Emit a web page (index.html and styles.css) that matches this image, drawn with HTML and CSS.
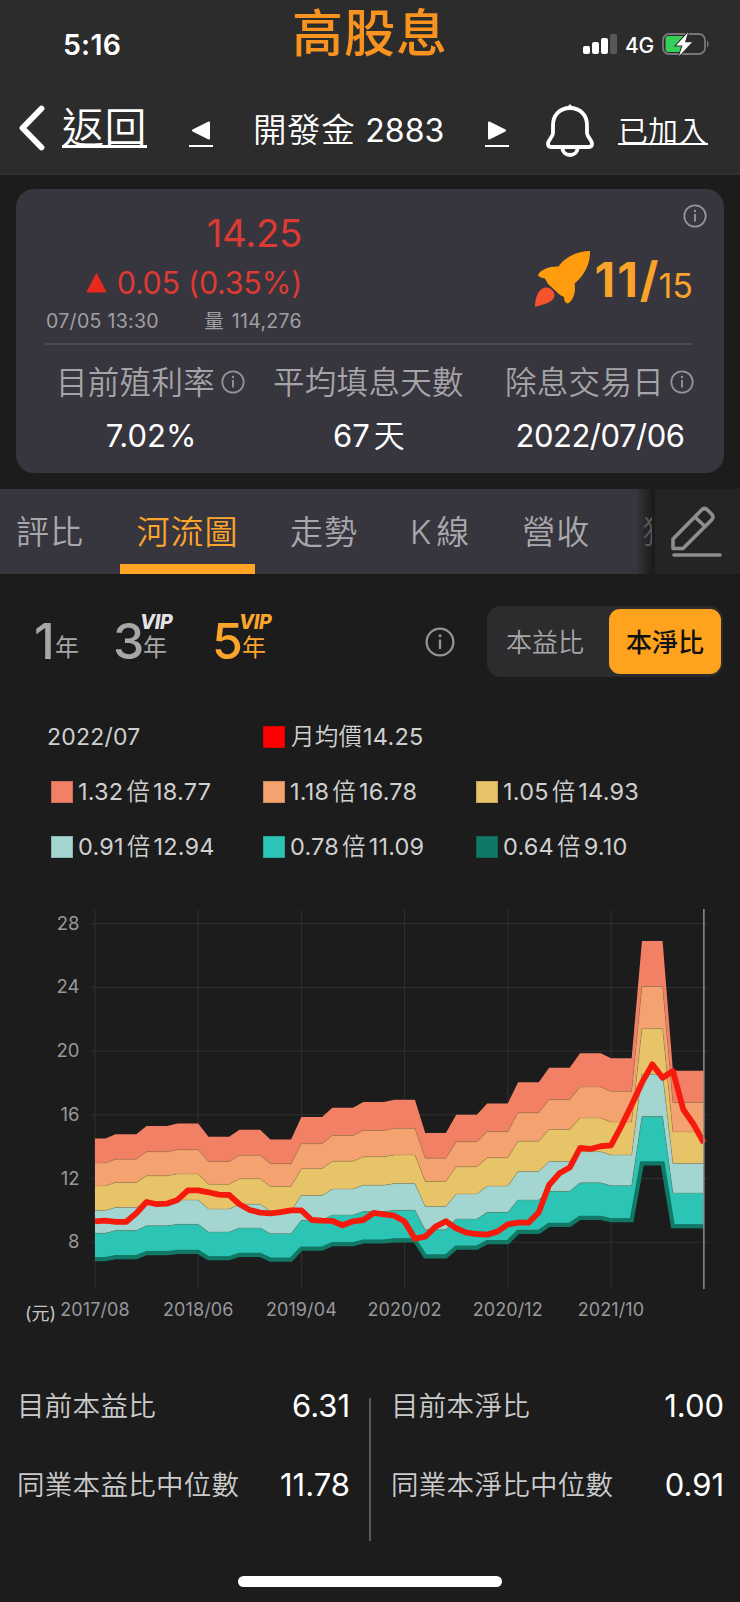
FILE: index.html
```html
<!DOCTYPE html>
<html lang="zh-Hant">
<head>
    <meta charset="utf-8">
    <title>高股息</title>
    <link rel="stylesheet" href="styles.css">
</head>
<body>
    <svg class="defs">
        <symbol id="info" viewBox="0 0 24 24">
            <circle cx="12" cy="12" r="10.7" fill="none" stroke="currentColor" stroke-width="1.8"/>
            <path d="M12 10v7.6" stroke="currentColor" stroke-width="1.9" fill="none"/>
            <circle cx="12" cy="7" r="1.2" fill="currentColor"/>
        </symbol>
    </svg>

    <header>
        <div class="status">
            <span class="time">5:16</span>
            <span class="app-name">高股息</span>
            <div class="status-icons">
                <svg width="34" height="22" viewBox="0 0 34 22">
                    <rect x="0" y="13" width="7" height="8" rx="2" fill="#fff"/>
                    <rect x="9" y="9" width="7" height="12" rx="2" fill="#fff"/>
                    <rect x="18" y="5" width="7" height="16" rx="2" fill="#fff"/>
                    <rect x="27" y="1" width="7" height="20" rx="2" fill="#58585a"/>
                </svg>
                <span class="network">4G</span>
                <svg width="48" height="26" viewBox="0 0 48 26">
                    <rect x="1" y="3" width="42" height="20" rx="6" fill="none" stroke="#77777a" stroke-width="1.8"/>
                    <path d="M45 9.500c2 1 2 6 0 7z" fill="#77777a"/>
                    <path d="M6.500 5H22l-8 9h7l-3 7H6.500a3 3 0 0 1-3-3V8a3 3 0 0 1 3-3z" fill="#35d058"/>
                    <path class="bolt" d="M26 1.500L14 14.500h6.500L17 25 30 11.300H23z" fill="#fff" stroke="#2c2c2c" stroke-width="2"/>
                </svg>
            </div>
        </div>
        <nav>
            <a class="back">
                <svg width="28" height="48" viewBox="0 0 28 48"><path d="M23.500 4.500L4.500 24l19 19.500" fill="none" stroke="#fff" stroke-width="5.800" stroke-linecap="round" stroke-linejoin="round"/></svg>
                <span>返回</span>
            </a>
            <a class="step prev"><svg width="20" height="19" viewBox="0 0 20 19"><path d="M18 1.500v16L2 9.500z" fill="#fff" stroke="#fff" stroke-width="2" stroke-linejoin="round"/></svg></a>
            <h1>開發金 <span>2883</span></h1>
            <a class="step next"><svg width="20" height="19" viewBox="0 0 20 19"><path d="M2 1.500v16L18 9.500z" fill="#fff" stroke="#fff" stroke-width="2" stroke-linejoin="round"/></svg></a>
            <svg class="bell" width="50" height="54" viewBox="0 0 50 54" fill="none" stroke="#fff" stroke-width="3.800" stroke-linejoin="round">
                <path d="M25 4C14 4 8 12 8 21v8c0 4-5 7-5 10.500 0 2.300 1 3.500 3 3.500h38c2 0 3-1.200 3-3.500 0-3.500-5-6.500-5-10.500v-8C42 12 36 4 25 4z"/>
                <path d="M17.500 43.500c0 10 15 10 15 0"/>
                <path d="M25 1l2 2.500h-4z" stroke-width="1.500" fill="#fff"/>
            </svg>
            <a class="joined">已加入</a>
        </nav>
    </header>

    <section class="card">
        <svg class="info card-info"><use href="#info"/></svg>
        <div class="quote">
            <div class="quote-left">
                <div class="price">14.25</div>
                <div class="change">
                    <svg width="21" height="21" viewBox="0 0 21 21"><path d="M10.500 1.500L20 20H1z" fill="#e82a1e" stroke="#e82a1e" stroke-linejoin="round"/></svg>
                    <span>0.05 (0.35%)</span>
                </div>
                <div class="meta"><span class="date">07/05 13:30</span><span><i>量</i> 114,276</span></div>
            </div>
            <div class="score">
                <svg width="58" height="58" viewBox="0 0 58 58">
                    <path d="M56 1C44 1 31 7 24.500 16.500 16 16 7 19 4 25c1 2.500 4 3 7 3.500 1 2 2 4 3.500 6L25 44c2 2 4 2 5 3 0 3 1 6 4 6.500 6-4 8-12 6.500-20C50 26 56.500 14 56 1z" fill="#ff9c0d"/>
                    <path d="M1 57C1 48 4 39 11 37.500c6-1 11 5 9 10C17.500 53 9 54.500 1 57z" fill="#f4532d"/>
                </svg>
                <b>11/</b><span>15</span>
            </div>
        </div>
        <div class="stats">
            <div class="stat">
                <div class="label">目前殖利率<svg class="info"><use href="#info"/></svg></div>
                <div class="value">7.02%</div>
            </div>
            <div class="stat">
                <div class="label">平均填息天數</div>
                <div class="value">67<span class="unit">天</span></div>
            </div>
            <div class="stat">
                <div class="label">除息交易日<svg class="info"><use href="#info"/></svg></div>
                <div class="value ex-date">2022/07/06</div>
            </div>
        </div>
    </section>

    <div class="tabs">
        <div class="tab-list">
            <a>評比</a>
            <a class="active">河流圖</a>
            <a>走勢</a>
            <a class="k">K<span>線</span></a>
            <a>營收</a>
            <a class="cut">獲</a>
        </div>
        <a class="edit">
            <svg width="54" height="54" viewBox="0 0 54 54" fill="none" stroke="#8e8e8e" stroke-width="3.600" stroke-linecap="round" stroke-linejoin="round">
                <path d="M3 34L31.500 5c2-2 4-2 6 0l4 4c2 2 2 4 0 6L13 43.500H3z"/>
                <path d="M25 12l10 9.500"/>
                <path d="M4 50h46"/>
            </svg>
        </a>
    </div>

    <div class="controls">
        <div class="periods">
            <a><b>1</b><span>年</span></a>
            <a><b>3</b><span>年<em>VIP</em></span></a>
            <a class="active"><b>5</b><span>年<em>VIP</em></span></a>
        </div>
        <svg class="info"><use href="#info"/></svg>
        <div class="switch">
            <a>本益比</a>
            <a class="active">本淨比</a>
        </div>
    </div>

    <div class="legend">
        <div class="month">2022/07</div>
        <div class="wide"><i class="c-price"></i><span class="cjk">月均價</span>14.25</div>
        <div><i class="c1"></i>1.32<span class="cjk">倍</span>18.77</div>
        <div><i class="c2"></i>1.18<span class="cjk">倍</span>16.78</div>
        <div><i class="c3"></i>1.05<span class="cjk">倍</span>14.93</div>
        <div><i class="c4"></i>0.91<span class="cjk">倍</span>12.94</div>
        <div><i class="c5"></i>0.78<span class="cjk">倍</span>11.09</div>
        <div><i class="c6"></i>0.64<span class="cjk">倍</span>9.10</div>
    </div>

    <svg id="chart" width="740" height="450" viewBox="0 0 740 450"></svg>

    <div class="compare">
        <dl>
            <dt>目前本益比</dt><dd>6.31</dd>
            <dt>同業本益比中位數</dt><dd>11.78</dd>
        </dl>
        <dl>
            <dt>目前本淨比</dt><dd>1.00</dd>
            <dt>同業本淨比中位數</dt><dd>0.91</dd>
        </dl>
    </div>

    <div class="home-bar"></div>

    <script src="chart.js"></script>
</body>
</html>
```

FILE: styles.css
```css
* {
    box-sizing: border-box;
}
body {
    margin: 0;
    width: 740px;
    height: 1602px;
    overflow: hidden;
    background: #1c1c1c;
    color: #fff;
    font-family: Inter, "Noto Sans CJK TC", sans-serif;
}
.defs {
    display: none;
}
svg {
    display: block;
    flex: none;
}
i {
    font-style: normal;
}
.info {
    width: 24px;
    height: 24px;
    color: #949398;
}

/* header */
header {
    height: 175px;
    background: #2c2c2c;
    border-bottom: 1px solid #343434;
}
.status {
    display: grid;
    grid-template-columns: 1fr 154px 1fr;
    height: 88px;
}
.time {
    padding: 27px 0 0 63px;
    font-size: 28.500px;
    line-height: 35px;
    font-weight: 600;
    letter-spacing: 0.2px;
}
.app-name {
    margin-left: -1px;
    color: #f7931e;
    font-size: 51px;
    line-height: 67px;
    font-weight: 500;
    letter-spacing: 1px;
    white-space: nowrap;
}
.status-icons {
    display: flex;
    align-items: center;
    height: 34px;
    margin-top: 27px;
    padding-left: 136px;
}
.network {
    width: 29px;
    margin: 2px 8px 0;
    font-size: 21px;
    font-weight: 450;
    letter-spacing: -0.3px;
}
.bolt {
    paint-order: stroke;
}
nav {
    display: flex;
    height: 86px;
    padding-left: 18px;
}
.back {
    display: flex;
    width: 171px;
}
.back svg {
    margin-top: 16px;
}
.back span {
    height: 60px;
    margin-left: 16px;
    border-bottom: 3px solid #fff;
    font-size: 42px;
    line-height: 79px;
    font-weight: 350;
    letter-spacing: 0.5px;
}
.step {
    width: 24px;
    height: 59px;
    padding: 33px 2px 0;
    border-bottom: 2px solid #fff;
}
h1 {
    width: 232px;
    margin: 0;
    padding-left: 40px;
    font-size: 33.500px;
    line-height: 84px;
    font-weight: 350;
    letter-spacing: 0.6px;
    white-space: nowrap;
}
h1 span {
    font-size: 32px;
    font-weight: 400;
    letter-spacing: 0;
}
.next {
    margin-left: 40px;
}
.bell {
    margin: 16px 0 0 36px;
}
.joined {
    height: 57px;
    margin-left: 23px;
    border-bottom: 2px solid #fff;
    font-size: 30px;
    line-height: 86px;
    font-weight: 350;
}

/* quote card */
.card {
    position: relative;
    width: 708px;
    height: 284px;
    margin: 14px 16px 16px;
    padding: 0 31px 0 29px;
    border-radius: 18px;
    background: #37353d;
}
.card-info {
    position: absolute;
    top: 15px;
    right: 17px;
}
.quote {
    display: flex;
    justify-content: space-between;
    height: 156px;
    border-bottom: 2px solid #4b4a50;
}
.quote-left {
    width: 257px;
    padding-top: 19px;
    text-align: right;
}
.price {
    color: #dc3a33;
    font-size: 38.500px;
    line-height: 50px;
    font-weight: 400;
    letter-spacing: -0.4px;
}
.change {
    display: flex;
    justify-content: flex-end;
    align-items: center;
    gap: 10px;
    height: 48px;
    margin-bottom: 2px;
    color: #dc3a33;
    font-size: 30.500px;
    letter-spacing: -0.3px;
    font-weight: 400;
}
.meta {
    display: flex;
    justify-content: space-between;
    padding-left: 1px;
    color: #a09fa4;
    font-size: 19.500px;
    line-height: 27px;
    font-weight: 400;
    letter-spacing: 0.3px;
}
.meta i {
    margin-right: 2px;
    font-size: 19.500px;
}
.score {
    display: flex;
    padding-top: 61px;
    color: #f9a32b;
}
.score b {
    margin: 0 -2px 0 2px;
    font-size: 48px;
    line-height: 59px;
    letter-spacing: 2px;
}
.score span {
    font-size: 34px;
    line-height: 71px;
    font-weight: 400;
}
.stats {
    display: flex;
    margin: 0 -1px 0 11px;
}
.stat:nth-child(2) {
    margin-left: 28px;
}
.stat:last-child {
    margin-left: auto;
}
.label {
    display: flex;
    align-items: center;
    gap: 6px;
    height: 74px;
    padding-bottom: 4px;
    color: #a5a4a8;
    font-size: 31.500px;
    font-weight: 350;
    letter-spacing: 0.3px;
}
.label .info {
    margin-top: 4px;
}
.value {
    padding-left: 1px;
    line-height: 34px;
    font-size: 31px;
    font-weight: 400;
    text-align: center;
}
.ex-date {
    letter-spacing: -0.5px;
}
.unit {
    margin-left: 4px;
    font-weight: 350;
}

/* tabs */
.tabs {
    display: flex;
    height: 85px;
}
.tab-list {
    display: flex;
    width: 655px;
    padding-left: 16px;
    overflow: hidden;
    background: linear-gradient(90deg, #37353d 636px, #222 649px, #1c1c1c 652px);
    color: #a9a8ac;
    font-size: 33px;
    line-height: 86px;
    font-weight: 350;
    letter-spacing: 1px;
    white-space: nowrap;
}
.tab-list a {
    flex: none;
    margin-right: 52px;
}
.tab-list a:first-child {
    margin-right: 36px;
}
.tab-list .active {
    width: 135px;
    margin-right: 35px;
    border-bottom: 10px solid #ffa424;
    color: #fca52d;
    text-align: center;
}
.k span {
    margin-left: 4px;
}
.tab-list .cut {
    width: 10px;
    margin: 0;
    overflow: hidden;
    color: #555;
}
.edit {
    flex: 1;
    padding: 16px 0 0 15px;
    background: #242424;
}

/* range and mode */
.controls {
    display: flex;
    align-items: center;
    height: 135px;
}
.periods {
    display: flex;
    width: 425px;
    padding-left: 34px;
    color: #a7a7a8;
}
.periods a {
    display: flex;
    width: 79px;
    height: 60px;
}
.periods a + a {
    width: 99px;
}
.periods b {
    width: 30px;
    font-size: 50px;
    line-height: 58px;
    font-weight: 550;
    letter-spacing: -1px;
}
.periods a:first-child b {
    width: 21px;
}
.periods span {
    position: relative;
    font-size: 24px;
    line-height: 71px;
    font-weight: 400;
}
.periods em {
    position: absolute;
    top: -6px;
    left: -3px;
    color: #e3e3e3;
    font-size: 19.500px;
    line-height: 32px;
    font-weight: 800;
    letter-spacing: -0.3px;
}
.periods .active,
.periods .active em {
    color: #fca52d;
}
.controls .info {
    width: 30px;
    height: 30px;
}
.switch {
    display: flex;
    width: 236px;
    height: 71px;
    margin-left: 32px;
    padding: 3px 2px;
    border-radius: 14px;
    background: #2c2c2e;
    color: #a7a7a8;
    font-size: 26px;
    line-height: 67px;
    font-weight: 350;
    text-align: center;
}
.switch a {
    flex: 1;
    padding-right: 8px;
}
.switch .active {
    flex: none;
    width: 112px;
    padding: 0;
    border-radius: 11px;
    background: #ffa31f;
    color: #111;
    font-weight: 500;
}

/* legend */
.legend {
    display: grid;
    grid-template-columns: 212px 213px 1fr;
    grid-auto-rows: 55px;
    padding-left: 51px;
    height: 181px;
    color: #d0d0d0;
    font-size: 23.500px;
    font-weight: 400;
    letter-spacing: 0.2px;
}
.legend div {
    display: flex;
    align-items: center;
}
.legend .month {
    margin-left: -4px;
    font-size: 23px;
}
.legend .wide {
    grid-column: span 2;
}
.legend i {
    width: 22px;
    height: 22px;
    margin-right: 5px;
    border: 1px solid rgba(0, 0, 0, 0.15);
}
.cjk {
    margin: 0 3px 4px;
    font-weight: 350;
}
.wide .cjk {
    margin: 0 1px 4px;
}
.c-price { background: #f00; }
.c1 { background: #f28064; }
.c2 { background: #f4a26f; }
.c3 { background: #e8c468; }
.c4 { background: #a3d5d1; }
.c5 { background: #2cc4b5; }
.c6 { background: #117865; }

/* chart */
#chart text {
    fill: #98989c;
    font-size: 18.500px;
    font-weight: 400;
}
#chart .date-label {
    font-size: 18px;
    letter-spacing: 0.1px;
}
#chart .unit-label {
    fill: #c4c4c6;
    font-size: 18px;
}

/* comparison */
.compare {
    display: grid;
    grid-template-columns: 371px 1fr;
    height: 143px;
    margin-top: 58px;
}
.compare dl {
    display: grid;
    grid-template-columns: 1fr auto;
    grid-auto-rows: 79px;
    margin: -31px 0 0;
    padding: 0 16px 0 20px;
    line-height: 79px;
}
.compare dl:first-child {
    padding: 0 21px 0 17px;
    background: linear-gradient(#5a5a5a, #5a5a5a) right 31px / 2px 143px no-repeat;
    height: 174px;
}
dt {
    color: #cbcbcb;
    font-size: 27.500px;
    font-weight: 350;
    letter-spacing: 0.3px;
}
dd {
    margin: 0;
    font-size: 31px;
    line-height: 77px;
    font-weight: 400;
    text-align: right;
}
.home-bar {
    width: 264px;
    height: 11px;
    margin: 35px auto 0;
    border-radius: 6px;
    background: #fff;
}
```

FILE: chart.js
```js
var chart = document.getElementById('chart');
var LEFT = 95, MONTH = 10.32, LAST = 59;

// upper band (1.32x) per month: [first month, value]
var quarters = [
    [0, 14.51], [2, 14.78], [5, 15.30], [8, 15.45], [11, 14.63], [14, 15.07], [17, 14.46],
    [20, 15.87], [23, 16.45], [26, 16.80], [29, 16.95], [32, 14.86], [35, 16.01], [38, 16.72],
    [41, 18.04], [44, 18.96], [47, 19.86], [50, 19.55], [53, 26.91], [56, 18.77], [60, 0]
];
var price = [
    9.32, 9.36, 9.28, 9.28, 9.82, 10.53, 10.39, 10.43, 10.66, 11.26, 11.26, 11.14,
    10.99, 10.97, 10.39, 10.03, 9.86, 9.82, 9.90, 10.01, 10.01, 9.40, 9.36, 9.34,
    9.07, 9.32, 9.40, 9.84, 9.76, 9.67, 9.30, 8.23, 8.36, 8.98, 9.32, 8.88,
    8.61, 8.52, 8.48, 8.67, 9.13, 9.23, 9.23, 9.88, 11.60, 12.33, 12.69, 13.92,
    13.86, 14.03, 14.09, 15.30, 16.62, 18.02, 19.17, 18.33, 18.75, 16.35, 15.41, 14.25
];
var bands = [
    [1.32, '#f28064'], [1.18, '#f4a26f'], [1.05, '#e8c468'],
    [0.91, '#a3d5d1'], [0.78, '#2cc4b5'], [0.64, '#117865']
];

function x(m) { return LEFT + m * MONTH; }
function y(v) { return 33.7 + (28 - v) * 15.93; }

function add(name, attrs, text) {
    var el = document.createElementNS('http://www.w3.org/2000/svg', name);
    for (var k in attrs) el.setAttribute(k, attrs[k]);
    if (text) el.textContent = text;
    chart.appendChild(el);
}
function line(x1, y1, x2, y2, color, w) {
    add('line', { x1: x1, y1: y1, x2: x2, y2: y2, stroke: color, 'stroke-width': w });
}
function bandPoints(ratio) {
    var pts = [];
    for (var i = 0; i < quarters.length - 1; i++) {
        var v = quarters[i][1] * ratio / 1.32;
        pts.push([x(quarters[i][0]), y(v)]);
        pts.push([x(quarters[i + 1][0] - 1), y(v)]);
    }
    return pts;
}

[28, 24, 20, 16, 12, 8].forEach(function(v) {
    line(91, y(v), 708, y(v), '#303133', 1);
    add('text', { x: 79.5, y: y(v) + 6, 'text-anchor': 'end' }, String(v));
});
['2017/08', '2018/06', '2019/04', '2020/02', '2020/12', '2021/10'].forEach(function(label, i) {
    line(x(i * 10), 20, x(i * 10), 399, '#303133', 1);
    add('text', { x: x(i * 10), y: 425.5, 'text-anchor': 'middle', 'class': 'date-label' }, label);
});
add('text', { x: 25, y: 429.5, 'class': 'unit-label' }, '(元)');

bands.forEach(function(band, i) {
    var top = bandPoints(band[0]);
    if (i === 5) {
        add('polyline', {
            points: top.map(function(p) { return [p[0], p[1] + 1.5]; }).join(' '),
            fill: 'none', stroke: band[1], 'stroke-width': 4.2
        });
        return;
    }
    var bottom = bandPoints(bands[i + 1][0]).reverse();
    add('polygon', { points: top.concat(bottom).join(' '), fill: band[1] });
    if (i > 0) {
        add('polyline', { points: top.join(' '), fill: 'none', stroke: '#8a7850', 'stroke-opacity': 0.5, 'stroke-width': 0.7 });
    }
});

add('polyline', {
    points: price.map(function(v, m) { return [x(m), y(v)]; }).join(' '),
    fill: 'none', stroke: '#f51a0c', 'stroke-width': 5.8, 'stroke-linejoin': 'round'
});
line(x(LAST), 19, x(LAST), 399, '#909092', 1.5);
```
